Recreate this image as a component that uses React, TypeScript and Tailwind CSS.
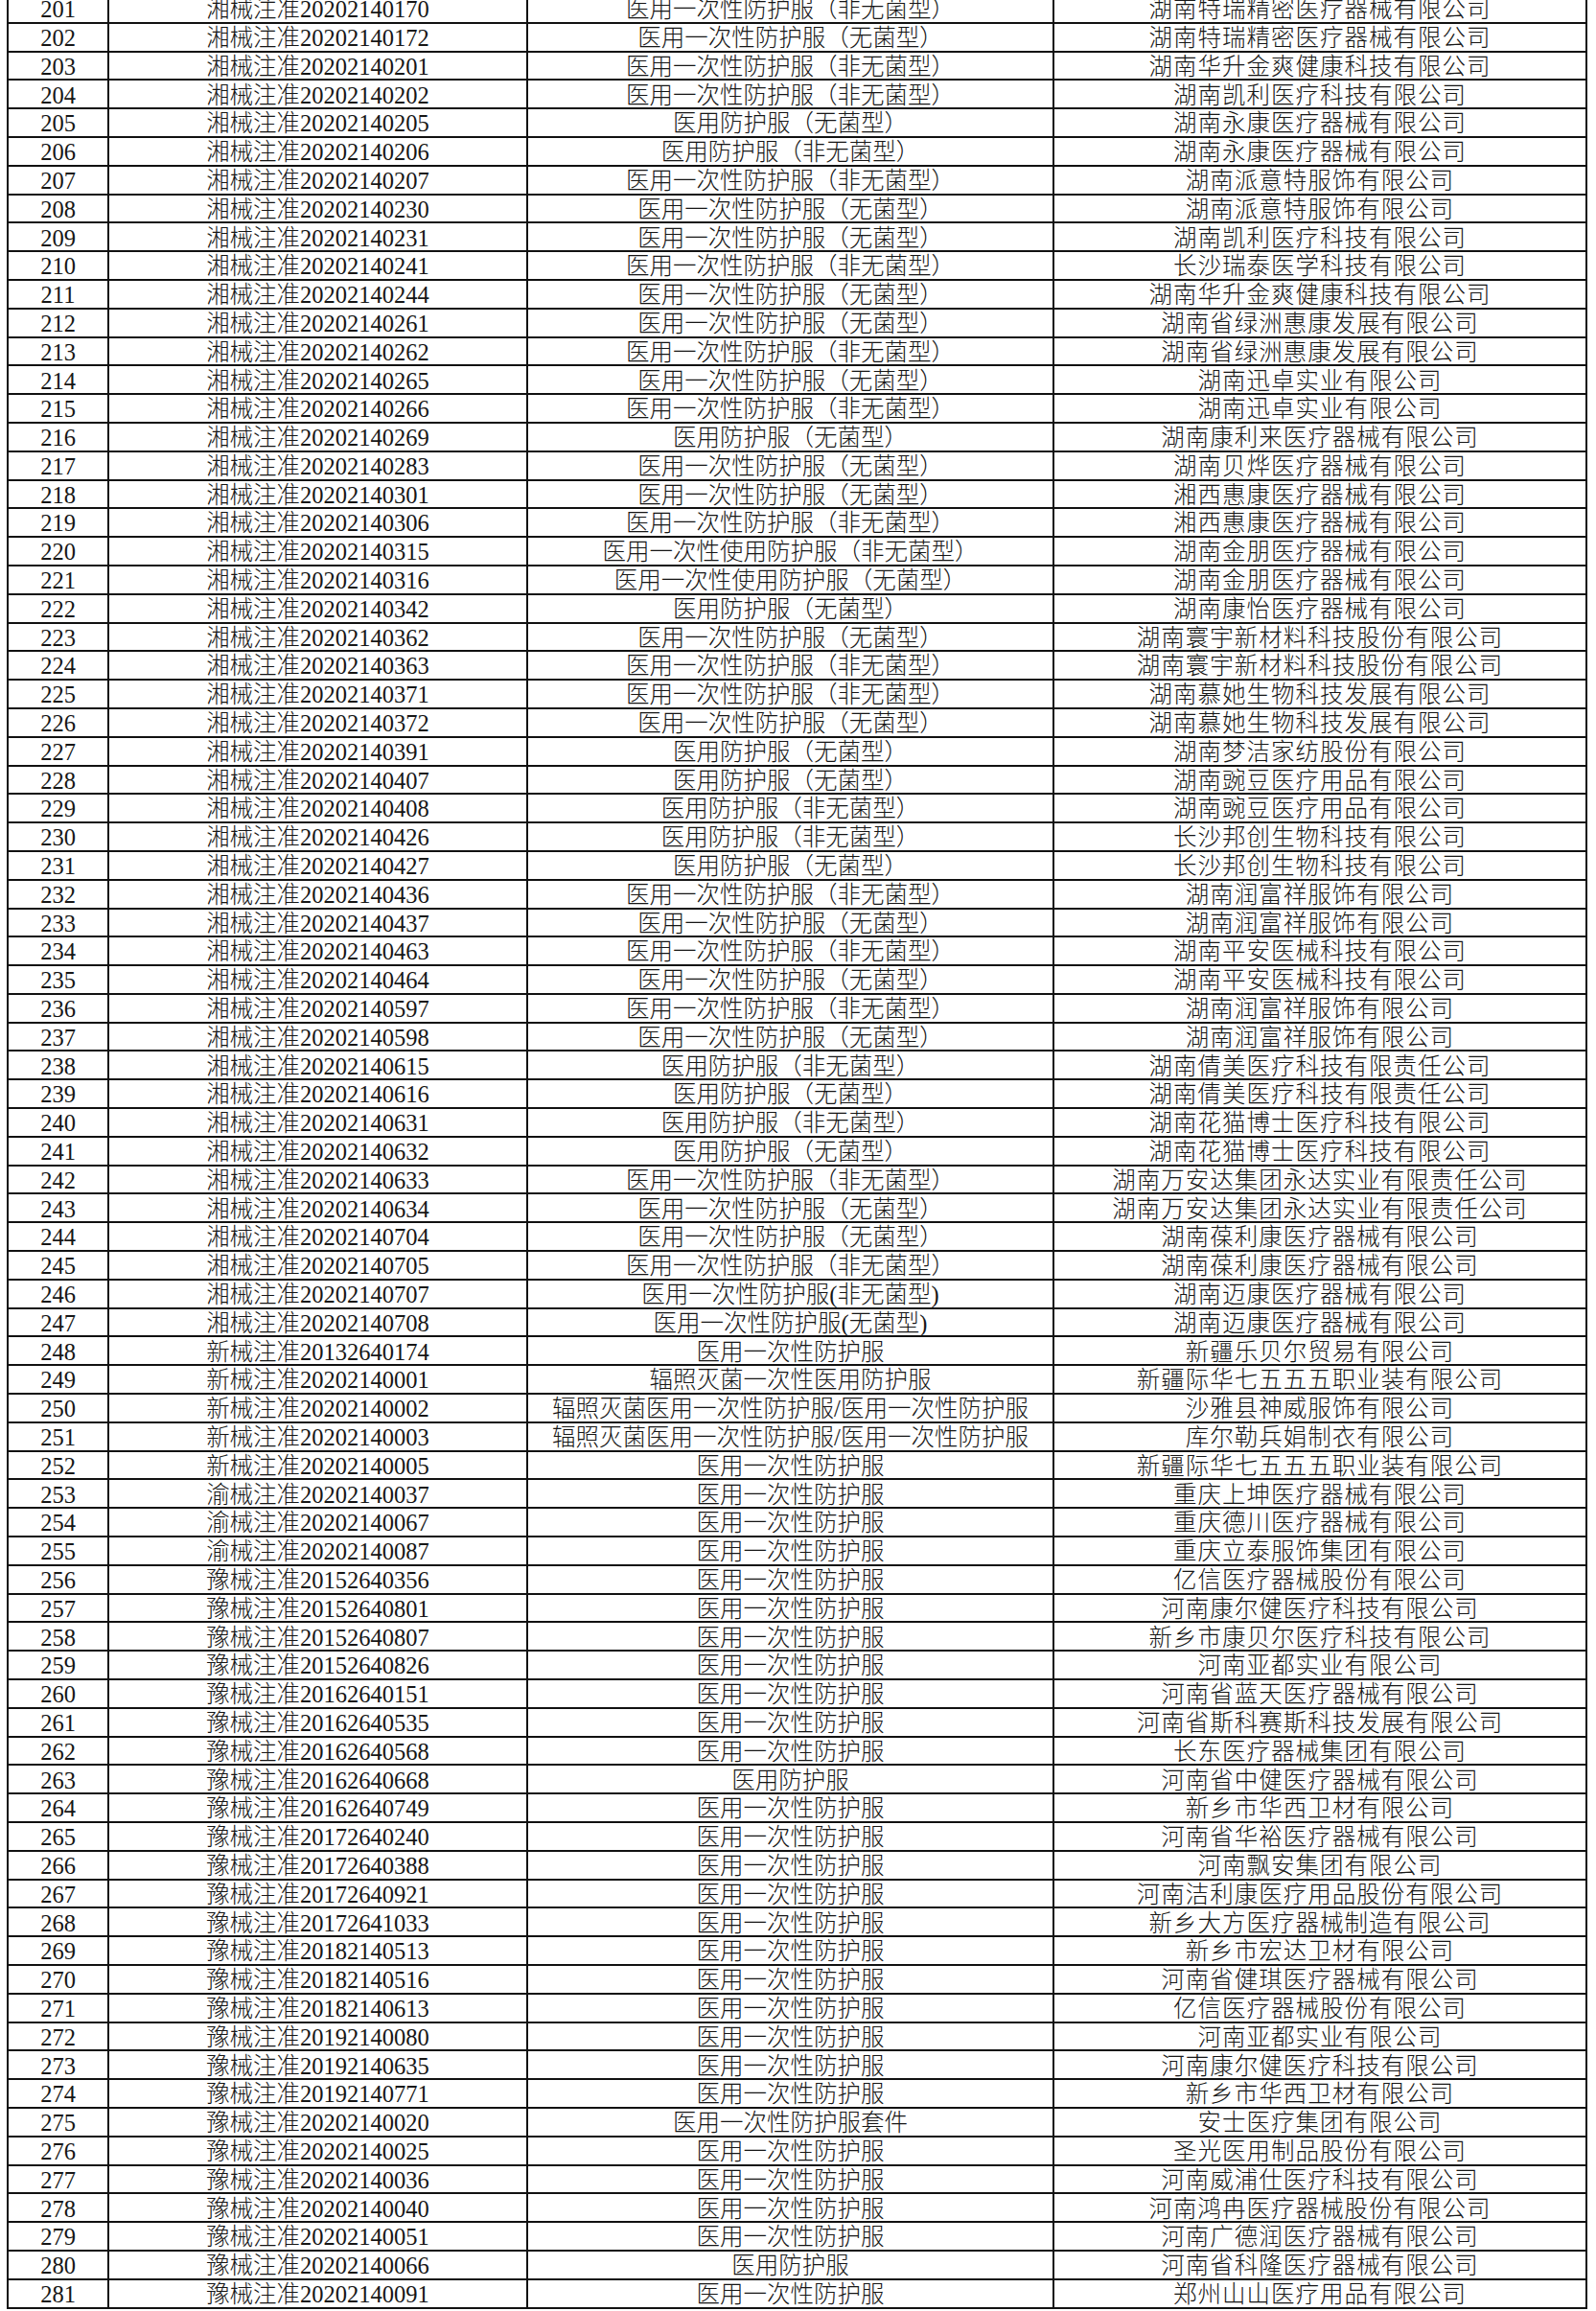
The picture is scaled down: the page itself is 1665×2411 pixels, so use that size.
const rows: [string, string, string][] = [
  ["湘械注准20202140170", "医用一次性防护服（非无菌型）", "湖南特瑞精密医疗器械有限公司"],
  ["湘械注准20202140172", "医用一次性防护服（无菌型）", "湖南特瑞精密医疗器械有限公司"],
  ["湘械注准20202140201", "医用一次性防护服（非无菌型）", "湖南华升金爽健康科技有限公司"],
  ["湘械注准20202140202", "医用一次性防护服（非无菌型）", "湖南凯利医疗科技有限公司"],
  ["湘械注准20202140205", "医用防护服（无菌型）", "湖南永康医疗器械有限公司"],
  ["湘械注准20202140206", "医用防护服（非无菌型）", "湖南永康医疗器械有限公司"],
  ["湘械注准20202140207", "医用一次性防护服（非无菌型）", "湖南派意特服饰有限公司"],
  ["湘械注准20202140230", "医用一次性防护服（无菌型）", "湖南派意特服饰有限公司"],
  ["湘械注准20202140231", "医用一次性防护服（无菌型）", "湖南凯利医疗科技有限公司"],
  ["湘械注准20202140241", "医用一次性防护服（非无菌型）", "长沙瑞泰医学科技有限公司"],
  ["湘械注准20202140244", "医用一次性防护服（无菌型）", "湖南华升金爽健康科技有限公司"],
  ["湘械注准20202140261", "医用一次性防护服（无菌型）", "湖南省绿洲惠康发展有限公司"],
  ["湘械注准20202140262", "医用一次性防护服（非无菌型）", "湖南省绿洲惠康发展有限公司"],
  ["湘械注准20202140265", "医用一次性防护服（无菌型）", "湖南迅卓实业有限公司"],
  ["湘械注准20202140266", "医用一次性防护服（非无菌型）", "湖南迅卓实业有限公司"],
  ["湘械注准20202140269", "医用防护服（无菌型）", "湖南康利来医疗器械有限公司"],
  ["湘械注准20202140283", "医用一次性防护服（无菌型）", "湖南贝烨医疗器械有限公司"],
  ["湘械注准20202140301", "医用一次性防护服（无菌型）", "湘西惠康医疗器械有限公司"],
  ["湘械注准20202140306", "医用一次性防护服（非无菌型）", "湘西惠康医疗器械有限公司"],
  ["湘械注准20202140315", "医用一次性使用防护服（非无菌型）", "湖南金朋医疗器械有限公司"],
  ["湘械注准20202140316", "医用一次性使用防护服（无菌型）", "湖南金朋医疗器械有限公司"],
  ["湘械注准20202140342", "医用防护服（无菌型）", "湖南康怡医疗器械有限公司"],
  ["湘械注准20202140362", "医用一次性防护服（无菌型）", "湖南寰宇新材料科技股份有限公司"],
  ["湘械注准20202140363", "医用一次性防护服（非无菌型）", "湖南寰宇新材料科技股份有限公司"],
  ["湘械注准20202140371", "医用一次性防护服（非无菌型）", "湖南慕她生物科技发展有限公司"],
  ["湘械注准20202140372", "医用一次性防护服（无菌型）", "湖南慕她生物科技发展有限公司"],
  ["湘械注准20202140391", "医用防护服（无菌型）", "湖南梦洁家纺股份有限公司"],
  ["湘械注准20202140407", "医用防护服（无菌型）", "湖南豌豆医疗用品有限公司"],
  ["湘械注准20202140408", "医用防护服（非无菌型）", "湖南豌豆医疗用品有限公司"],
  ["湘械注准20202140426", "医用防护服（非无菌型）", "长沙邦创生物科技有限公司"],
  ["湘械注准20202140427", "医用防护服（无菌型）", "长沙邦创生物科技有限公司"],
  ["湘械注准20202140436", "医用一次性防护服（非无菌型）", "湖南润富祥服饰有限公司"],
  ["湘械注准20202140437", "医用一次性防护服（无菌型）", "湖南润富祥服饰有限公司"],
  ["湘械注准20202140463", "医用一次性防护服（非无菌型）", "湖南平安医械科技有限公司"],
  ["湘械注准20202140464", "医用一次性防护服（无菌型）", "湖南平安医械科技有限公司"],
  ["湘械注准20202140597", "医用一次性防护服（非无菌型）", "湖南润富祥服饰有限公司"],
  ["湘械注准20202140598", "医用一次性防护服（无菌型）", "湖南润富祥服饰有限公司"],
  ["湘械注准20202140615", "医用防护服（非无菌型）", "湖南倩美医疗科技有限责任公司"],
  ["湘械注准20202140616", "医用防护服（无菌型）", "湖南倩美医疗科技有限责任公司"],
  ["湘械注准20202140631", "医用防护服（非无菌型）", "湖南花猫博士医疗科技有限公司"],
  ["湘械注准20202140632", "医用防护服（无菌型）", "湖南花猫博士医疗科技有限公司"],
  ["湘械注准20202140633", "医用一次性防护服（非无菌型）", "湖南万安达集团永达实业有限责任公司"],
  ["湘械注准20202140634", "医用一次性防护服（无菌型）", "湖南万安达集团永达实业有限责任公司"],
  ["湘械注准20202140704", "医用一次性防护服（无菌型）", "湖南葆利康医疗器械有限公司"],
  ["湘械注准20202140705", "医用一次性防护服（非无菌型）", "湖南葆利康医疗器械有限公司"],
  ["湘械注准20202140707", "医用一次性防护服(非无菌型)", "湖南迈康医疗器械有限公司"],
  ["湘械注准20202140708", "医用一次性防护服(无菌型)", "湖南迈康医疗器械有限公司"],
  ["新械注准20132640174", "医用一次性防护服", "新疆乐贝尔贸易有限公司"],
  ["新械注准20202140001", "辐照灭菌一次性医用防护服", "新疆际华七五五五职业装有限公司"],
  ["新械注准20202140002", "辐照灭菌医用一次性防护服/医用一次性防护服", "沙雅县神威服饰有限公司"],
  ["新械注准20202140003", "辐照灭菌医用一次性防护服/医用一次性防护服", "库尔勒兵娟制衣有限公司"],
  ["新械注准20202140005", "医用一次性防护服", "新疆际华七五五五职业装有限公司"],
  ["渝械注准20202140037", "医用一次性防护服", "重庆上坤医疗器械有限公司"],
  ["渝械注准20202140067", "医用一次性防护服", "重庆德川医疗器械有限公司"],
  ["渝械注准20202140087", "医用一次性防护服", "重庆立泰服饰集团有限公司"],
  ["豫械注准20152640356", "医用一次性防护服", "亿信医疗器械股份有限公司"],
  ["豫械注准20152640801", "医用一次性防护服", "河南康尔健医疗科技有限公司"],
  ["豫械注准20152640807", "医用一次性防护服", "新乡市康贝尔医疗科技有限公司"],
  ["豫械注准20152640826", "医用一次性防护服", "河南亚都实业有限公司"],
  ["豫械注准20162640151", "医用一次性防护服", "河南省蓝天医疗器械有限公司"],
  ["豫械注准20162640535", "医用一次性防护服", "河南省斯科赛斯科技发展有限公司"],
  ["豫械注准20162640568", "医用一次性防护服", "长东医疗器械集团有限公司"],
  ["豫械注准20162640668", "医用防护服", "河南省中健医疗器械有限公司"],
  ["豫械注准20162640749", "医用一次性防护服", "新乡市华西卫材有限公司"],
  ["豫械注准20172640240", "医用一次性防护服", "河南省华裕医疗器械有限公司"],
  ["豫械注准20172640388", "医用一次性防护服", "河南飘安集团有限公司"],
  ["豫械注准20172640921", "医用一次性防护服", "河南洁利康医疗用品股份有限公司"],
  ["豫械注准20172641033", "医用一次性防护服", "新乡大方医疗器械制造有限公司"],
  ["豫械注准20182140513", "医用一次性防护服", "新乡市宏达卫材有限公司"],
  ["豫械注准20182140516", "医用一次性防护服", "河南省健琪医疗器械有限公司"],
  ["豫械注准20182140613", "医用一次性防护服", "亿信医疗器械股份有限公司"],
  ["豫械注准20192140080", "医用一次性防护服", "河南亚都实业有限公司"],
  ["豫械注准20192140635", "医用一次性防护服", "河南康尔健医疗科技有限公司"],
  ["豫械注准20192140771", "医用一次性防护服", "新乡市华西卫材有限公司"],
  ["豫械注准20202140020", "医用一次性防护服套件", "安士医疗集团有限公司"],
  ["豫械注准20202140025", "医用一次性防护服", "圣光医用制品股份有限公司"],
  ["豫械注准20202140036", "医用一次性防护服", "河南威浦仕医疗科技有限公司"],
  ["豫械注准20202140040", "医用一次性防护服", "河南鸿冉医疗器械股份有限公司"],
  ["豫械注准20202140051", "医用一次性防护服", "河南广德润医疗器械有限公司"],
  ["豫械注准20202140066", "医用防护服", "河南省科隆医疗器械有限公司"],
  ["豫械注准20202140091", "医用一次性防护服", "郑州山山医疗用品有限公司"],
];

const cell = "flex items-center justify-center pt-[3px] whitespace-nowrap border-r-2 border-[#111]";

export default function App() {
  return (
    <div className="w-[1665px] h-[2411px] overflow-hidden bg-white text-[#161616] font-['Liberation_Serif','Noto_Sans_CJK_SC',serif] font-light text-[24.5px] leading-none">
      {/* the sheet continues above: first row is cut by the top edge */}
      <div className="ml-[7px] mt-[-5px] w-[1649px] border-l-2 border-[#111]">
        {rows.map(([code, name, company], i) => (
          <div key={code + i} className="flex h-[29.81px] border-b-2 border-[#111]">
            <div className={`${cell} w-[105px]`}>{201 + i}</div>
            <div className={`${cell} w-[437px]`}>{code}</div>
            <div className={`${cell} w-[549px]`}>{name}</div>
            <div className={`${cell} flex-1 tracking-[1px]`}>{company}</div>
          </div>
        ))}
      </div>
    </div>
  );
}
